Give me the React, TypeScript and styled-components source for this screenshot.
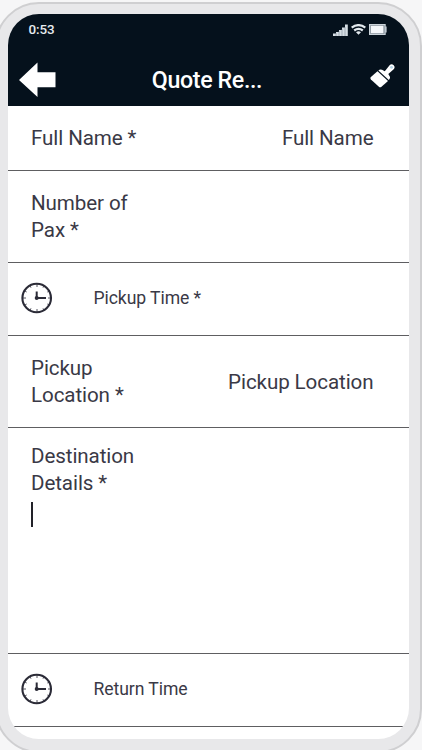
import React from "react";
import styled, { createGlobalStyle } from "styled-components";

const GlobalStyle = createGlobalStyle`
  * { box-sizing: border-box; }
  html, body { margin: 0; height: 100%; overflow: hidden; background: #f6f6f7; }
  body { font-family: Roboto, "Liberation Sans", sans-serif; color: #3a3946; }
`;

const Stage = styled.main`
  height: 750px;
  padding-top: 2px;
  overflow: hidden;
`;

const Phone = styled.div`
  width: 427px;
  height: 751px;
  margin-left: -5px;
  padding: 10px 10px 10px 11px;
  border: 2px solid #cfcfd1;
  border-radius: 44px;
  background: #e8e8ea;
`;

const Screen = styled.div`
  width: 401px;
  height: 725px;
  margin-left: -0.5px;
  border-radius: 31px;
  overflow: hidden;
  background: #fff;
`;

const Header = styled.header`
  height: 92px;
  background: #05111c;
  color: #fff;
`;

const StatusBar = styled.div`
  display: flex;
  align-items: center;
  justify-content: space-between;
  height: 32px;
  padding: 0 22px 1px 21px;
  font-size: 13.4px;
  font-weight: 500;
  letter-spacing: -0.1px;
  color: #e8edf1;
`;

const StatusIcons = styled.div`
  display: flex;
  align-items: center;
  gap: 3px;
`;

const TitleBar = styled.div`
  display: grid;
  grid-template-columns: 60px 1fr 60px;
  align-items: center;
  height: 60px;
  padding: 7px 14px 0 11px;
`;

const Title = styled.h1`
  margin: 0;
  padding-left: 1px;
  text-align: center;
  font-size: 23.2px;
  font-weight: 500;
  line-height: 28px;
  letter-spacing: -0.35px;
  white-space: nowrap;
`;

const IconButton = styled.button<{ $end?: boolean }>`
  display: flex;
  justify-content: ${(p) => (p.$end ? "flex-end" : "flex-start")};
  padding: ${(p) => (p.$end ? "0 0 7px" : "0")};
  border: 0;
  color: inherit;
  background: none;
`;

const Field = styled.div<{ $height: number; $top?: boolean }>`
  display: flex;
  flex-direction: ${(p) => (p.$top ? "column" : "row")};
  align-items: ${(p) => (p.$top ? "flex-start" : "center")};
  justify-content: ${(p) => (p.$top ? "flex-start" : "space-between")};
  height: ${(p) => p.$height}px;
  padding: ${(p) => (p.$top ? "14.5px" : "1.5px")} 35px 0 23.5px;
  border-bottom: 1.5px solid #5e5e61;
  font-size: 20.6px;
  line-height: 27.4px;
  letter-spacing: -0.1px;
`;

const Label = styled.label`
  width: 115px;
`;

const Value = styled.span``;

const Caret = styled.span`
  width: 2px;
  height: 25px;
  margin-top: 5px;
  background: #222229;
`;

const TimeField = styled.div`
  display: grid;
  grid-template-columns: 73px 1fr;
  align-items: center;
  height: 73px;
  padding: 0 0 2px 13px;
  border-bottom: 1.5px solid #5e5e61;
  font-size: 17.6px;
  letter-spacing: -0.08px;
`;

const Signal = () => (
  <svg width="15" height="12" viewBox="0 0 15 12" fill="#d5dde3">
    <path d="M0 9.6h3v2.4H0zM3 8h3v4H3zM6 6h3v6H6zM9 3.4h3V12H9zM12 .5h2.8V12H12z" />
    <path d="M3 9v3M6 7v5M9 5v7M12 3v9" stroke="#6f7b85" strokeWidth=".5" />
  </svg>
);

const Wifi = () => (
  <svg width="15" height="11" viewBox="0 0 15 11" fill="none" stroke="#e3eaee" strokeWidth="2.3">
    <path d="M.7 3.7Q7.5-1.4 14.3 3.7M3.2 6.5q4.3-3.3 8.6 0" />
    <path d="M5 8.2q2.5-1.8 5 0L7.5 10.8z" fill="#e3eaee" stroke="none" />
  </svg>
);

const Battery = () => (
  <svg width="18" height="11" viewBox="0 0 18 11">
    <path d="M.6.6h15.5v9.8H.6z" fill="#6f7b85" stroke="#cbd4da" strokeWidth="1.2" />
    <path d="M1.8 1.8h12.7v7.4H1.8z" fill="#f5f8fa" />
    <path d="M16.2 2.5h1.4v6h-1.4z" fill="#cbd4da" />
  </svg>
);

const BackArrow = () => (
  <svg width="37" height="36" viewBox="0 0 37 36" fill="#fff">
    <path d="M0 18 18.5.5v9.8h18v15h-18v9.7z" />
  </svg>
);

const Brush = () => (
  <svg width="25" height="24" viewBox="0 0 25 24" fill="#fff">
    <path d="M8.4 6.4Q10 4.8 12 5.8l2.8 1.5L19.6 1.3Q21.5-.5 23.7 1.2q1.8 2.2 0 4.1l-5.4 4.6 1.5 2.6q.8 1.8-1 3.4z" />
    <path d="M7.5 7.3 18 17l-6.8 6q-1.2.8-2.3-.2L.9 15.4q-1-1.1 0-2.3z" />
    <circle cx="21.5" cy="3.3" r="1.4" fill="#b5d3e5" />
  </svg>
);

const Clock = () => (
  <svg width="32" height="32" viewBox="0 0 32 32" fill="none" stroke="#2b2b37">
    <circle cx="15.7" cy="16" r="14.3" strokeWidth="2.1" />
    <path d="M16 2v3M16 27v3M2 16h3M27 16h3M9 3.9l1 1.8M22 26.3l1 1.8M3.9 9l1.8 1M26.3 22l1.8 1M3.9 23l1.8-1M26.3 10l1.8-1M9 28.1l1-1.8M22 5.7l1-1.8" strokeWidth=".8" />
    <path d="M15.7 9.5V16H25" strokeWidth="2" />
    <circle cx="15.7" cy="16" r="2" fill="#2b2b37" stroke="none" />
  </svg>
);

export default function App() {
  return (
    <>
      <GlobalStyle />
      <Stage>
        <Phone>
          <Screen>
            <Header>
              <StatusBar>
                <span>0:53</span>
                <StatusIcons><Signal /><Wifi /><Battery /></StatusIcons>
              </StatusBar>
              <TitleBar>
                <IconButton aria-label="Back"><BackArrow /></IconButton>
                <Title>Quote Re...</Title>
                <IconButton $end aria-label="Theme"><Brush /></IconButton>
              </TitleBar>
            </Header>
            <Field $height={65}><Label>Full Name *</Label><Value>Full Name</Value></Field>
            <Field $height={92}><Label>Number of Pax *</Label></Field>
            <TimeField><Clock /><span>Pickup Time *</span></TimeField>
            <Field $height={92}><Label>Pickup Location *</Label><Value>Pickup Location</Value></Field>
            <Field $height={226} $top><Label>Destination Details *</Label><Caret /></Field>
            <TimeField><Clock /><span>Return Time</span></TimeField>
          </Screen>
        </Phone>
      </Stage>
    </>
  );
}
